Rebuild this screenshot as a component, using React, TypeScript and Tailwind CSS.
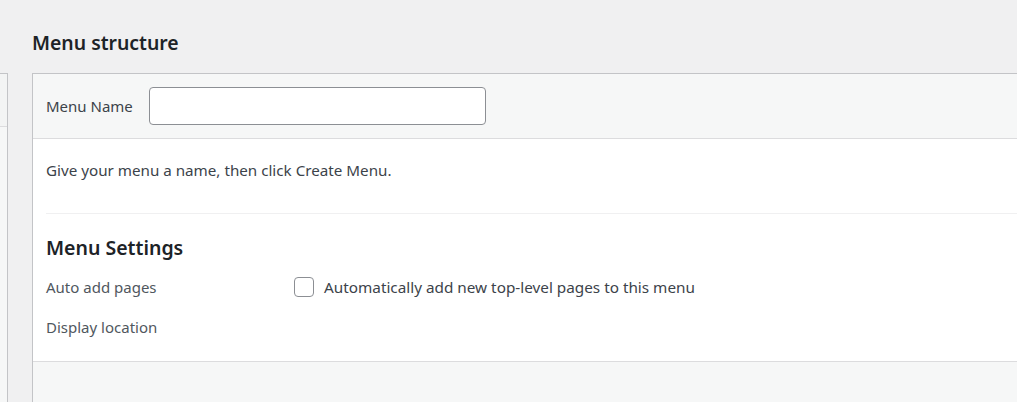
export default function App() {
  return (
    <div
      className="w-[1017px] h-[402px] overflow-hidden flex bg-[#f0f0f1] text-[#3c434a]"
      style={{ fontFamily: '"Noto Sans", "Open Sans", sans-serif' }}
    >
      {/* left column edge */}
      <aside className="w-[8px] shrink-0 mt-[73px] flex flex-col border-t border-r border-[#c3c4c7]">
        <div className="h-[53px] bg-[#f3f4f4] border-b border-[#dcdcde]" />
        <div className="flex-1 bg-[#f6f7f7]" />
      </aside>

      {/* Menu structure */}
      <main className="flex-1 ml-[24px] flex flex-col min-w-0">
        <h2 className="pt-[29px] mb-[16px] h-[57px] text-[19.4px] leading-[28px] font-semibold text-[#1d2327] whitespace-nowrap">
          Menu structure
        </h2>

        <div className="flex-1 flex flex-col border-l border-t border-[#c3c4c7]">
          <div className="h-[65px] flex items-center pl-[13px] bg-[#f6f7f7] border-b border-[#dcdcde]">
            <label className="text-[15px] w-[103px]">Menu Name</label>
            <input
              type="text"
              className="w-[337px] h-[38px] bg-white border border-[#8c8f94] rounded-[4px] px-2 outline-none"
            />
          </div>

          <div className="bg-white pl-[13px] pt-[21px] pb-[22px] border-b border-[#dcdcde]">
            <p className="text-[15.2px] leading-[20px]">Give your menu a name, then click Create Menu.</p>

            <div className="mt-[33px] pt-[20px] border-t border-[#f0f0f1]">
              <h3 className="text-[19.5px] leading-[28px] font-semibold text-[#1d2327]">Menu Settings</h3>
              <div className="mt-[13px] flex flex-col gap-[16px] text-[15px]">
                <div className="flex items-center h-[24px]">
                  <span className="w-[248px] shrink-0 text-[#50575e]">Auto add pages</span>
                  <label className="flex items-center gap-[10px]">
                    <span className="w-[20px] h-[20px] rounded-[4px] border border-[#8c8f94] bg-white" />
                    <span className="text-[15.3px]">Automatically add new top-level pages to this menu</span>
                  </label>
                </div>
                <div className="flex items-center h-[24px]">
                  <span className="w-[248px] shrink-0 text-[#50575e]">Display location</span>
                </div>
              </div>
            </div>
          </div>

          <div className="flex-1 bg-[#f6f7f7]" />
        </div>
      </main>
    </div>
  );
}
